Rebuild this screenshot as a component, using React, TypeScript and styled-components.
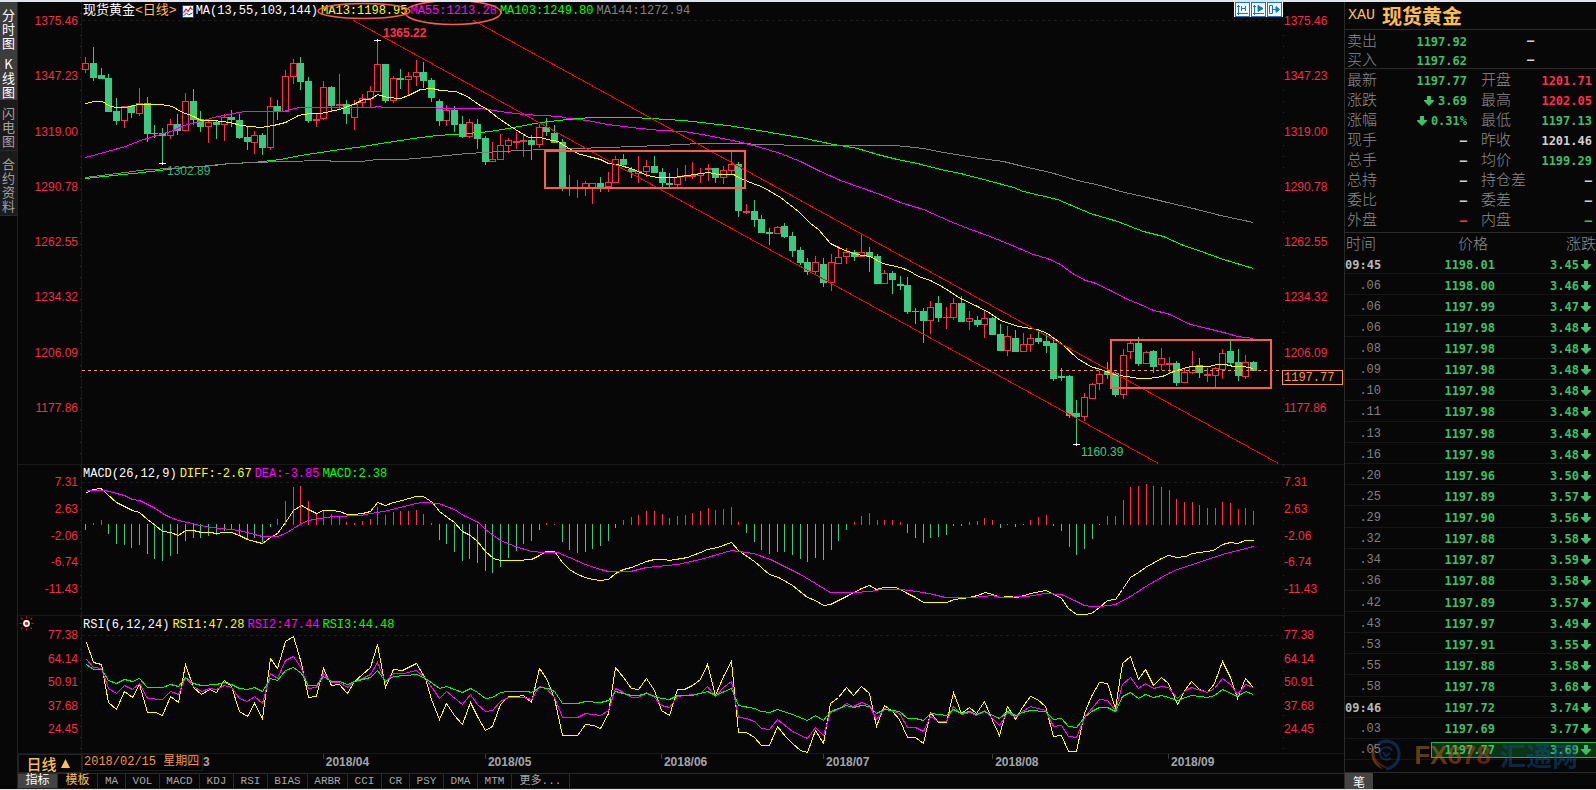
import React from "react";
import styled, { createGlobalStyle } from "styled-components";

const RED = "#ff2f4b";
const GREEN = "#3bc880";
const TEXT_GREEN = "#3cc068";
const AMBER = "#ffbe50";
const ORANGE = "#f79a38";
const YELLOW = "#ffff00";
const MAGENTA = "#ff00ff";
const LIME = "#00ff00";
const GREY = "#808080";
const LINE = "#181818";
const LINE_STRONG = "#2a2a2a";

const MONO = '"Liberation Mono", "Noto Sans CJK SC", monospace';
const BOLD_MONO = '"DejaVu Sans Mono", "Noto Sans CJK SC", monospace';
const SANS = '"Liberation Sans", "Noto Sans CJK SC", sans-serif';
const CJK = '"Noto Sans CJK SC", sans-serif';

/* ---------- data ---------- */

type Candle = [up: 0 | 1, high: number, top: number, bottom: number, low: number];

const candles: Candle[] = [
  [1, 57, 63, 70, 73], [0, 47, 63, 78, 81], [0, 68, 75, 79, 79], [0, 74, 78, 112, 112], [0, 98, 111, 121, 125],
  [1, 106, 106, 121, 128], [0, 105, 106, 113, 118], [1, 88, 103, 114, 116], [0, 97, 103, 134, 142], [0, 125, 133, 134, 138],
  [0, 128, 133, 136, 163], [1, 119, 124, 136, 139], [0, 114, 124, 131, 135], [1, 93, 101, 131, 131], [0, 89, 101, 120, 125],
  [0, 111, 119, 127, 132], [1, 120, 122, 127, 143], [0, 120, 122, 125, 139], [1, 114, 117, 125, 141], [0, 110, 117, 120, 127],
  [0, 114, 120, 138, 139], [0, 126, 137, 142, 150], [1, 131, 135, 143, 154], [0, 133, 135, 148, 155], [1, 97, 106, 148, 150],
  [0, 100, 106, 111, 120], [1, 70, 76, 112, 112], [1, 59, 63, 77, 84], [0, 57, 63, 82, 90], [0, 77, 81, 121, 123],
  [1, 114, 119, 121, 127], [1, 81, 87, 119, 120], [0, 86, 87, 106, 112], [1, 74, 104, 106, 109], [0, 100, 104, 114, 124],
  [1, 100, 104, 118, 130], [1, 94, 98, 103, 107], [1, 86, 91, 99, 107], [1, 40, 64, 92, 92], [0, 64, 64, 101, 103],
  [1, 76, 78, 101, 103], [0, 69, 78, 80, 89], [1, 72, 76, 80, 95], [1, 60, 72, 77, 86], [0, 62, 72, 81, 88],
  [0, 78, 80, 98, 102], [0, 99, 101, 121, 126], [1, 105, 110, 121, 126], [0, 106, 110, 125, 132], [0, 116, 124, 137, 138],
  [1, 119, 122, 137, 138], [0, 119, 124, 139, 149], [0, 136, 138, 162, 165], [1, 142, 159, 162, 162], [1, 134, 145, 160, 160],
  [1, 138, 140, 146, 153], [1, 132, 141, 143, 149], [1, 134, 140, 142, 157], [0, 135, 140, 145, 160], [1, 124, 127, 145, 148],
  [0, 118, 127, 132, 136], [0, 125, 133, 143, 143], [0, 139, 142, 188, 191], [1, 175, 187, 189, 196], [1, 180, 187, 189, 198],
  [1, 181, 183, 188, 196], [1, 183, 183, 188, 204], [0, 177, 183, 188, 192], [1, 172, 182, 187, 192], [1, 156, 159, 183, 183],
  [0, 154, 159, 165, 167], [0, 167, 169, 172, 178], [1, 156, 171, 174, 183], [1, 160, 166, 172, 177], [0, 156, 166, 173, 173],
  [0, 168, 172, 183, 188], [0, 173, 183, 185, 188], [1, 168, 177, 185, 187], [1, 165, 175, 177, 181], [1, 162, 175, 177, 179],
  [1, 168, 173, 176, 183], [1, 164, 168, 170, 181], [0, 168, 168, 178, 183], [1, 166, 170, 178, 184], [1, 152, 164, 171, 175],
  [0, 162, 164, 211, 217], [1, 204, 211, 213, 214], [0, 200, 211, 220, 227], [0, 215, 219, 233, 233], [0, 228, 232, 234, 245],
  [1, 226, 227, 234, 234], [0, 223, 226, 237, 238], [0, 232, 236, 251, 257], [0, 247, 250, 263, 265], [0, 258, 262, 272, 275],
  [1, 256, 262, 272, 275], [0, 258, 264, 283, 287], [1, 254, 262, 283, 291], [1, 246, 257, 264, 264], [1, 248, 252, 257, 264],
  [0, 250, 252, 257, 261], [1, 234, 252, 257, 257], [0, 247, 252, 257, 272], [0, 254, 256, 284, 284], [1, 270, 273, 284, 284],
  [0, 271, 273, 280, 294], [0, 276, 284, 286, 290], [0, 277, 285, 312, 314], [0, 308, 311, 312, 324], [0, 308, 311, 321, 343],
  [1, 301, 307, 321, 334], [0, 296, 303, 318, 322], [1, 307, 317, 318, 329], [1, 298, 303, 318, 320], [0, 296, 303, 322, 322],
  [1, 311, 318, 322, 330], [0, 316, 320, 325, 327], [1, 310, 318, 325, 338], [0, 317, 318, 335, 335], [0, 324, 334, 351, 351],
  [1, 326, 336, 351, 356], [0, 330, 338, 352, 352], [1, 333, 344, 352, 352], [1, 334, 338, 345, 352], [0, 330, 338, 342, 344],
  [0, 333, 341, 346, 353], [0, 340, 343, 379, 381], [0, 368, 376, 378, 381], [0, 375, 376, 416, 418], [0, 400, 413, 417, 444],
  [1, 393, 397, 417, 421], [1, 383, 384, 399, 399], [1, 371, 374, 384, 390], [0, 362, 371, 375, 379], [0, 372, 373, 395, 397],
  [1, 349, 355, 395, 399], [1, 341, 343, 352, 359], [0, 337, 343, 364, 366], [1, 351, 352, 364, 364], [0, 350, 351, 367, 373],
  [1, 348, 358, 365, 370], [1, 357, 363, 365, 374], [0, 361, 363, 383, 386], [1, 368, 372, 383, 383], [1, 351, 366, 373, 374],
  [0, 358, 365, 373, 378], [1, 368, 374, 376, 382], [1, 367, 368, 376, 387], [1, 349, 353, 370, 379], [0, 341, 351, 363, 365],
  [0, 349, 362, 376, 381], [1, 355, 362, 377, 379], [0, 361, 362, 371, 371],
];

/* Histogram bars, in pixels above (+) or below (-) the zero line. */
const histogram = [
  -6, 2, 5, -10, -20, -21, -24, -21, -30, -35, -37, -32, -30, -17, -14, -14, -12, -11, -7, -5, -12, -15, -14, -18, -3,
  6, 24, 38, 39, 24, 12, 15, 11, 8, 3, 2, 4, 6, 18, 10, 13, 14, 14, 15, 11, 2, -16, -20, -28, -37, -35, -39, -47, -49,
  -43, -34, -27, -20, -17, -6, 2, 1, -18, -26, -29, -28, -25, -22, -17, -4, 5, 8, 10, 14, 14, 11, 7, 9, 10, 12, 14, 17,
  15, 16, 18, 3, -9, -18, -26, -30, -28, -28, -31, -35, -38, -34, -36, -26, -17, -6, 3, 9, 12, 5, 5, 5, 3, -9, -14, -19,
  -14, -13, -11, -2, -2, 3, 4, 7, 5, -4, -1, -3, -1, 5, 8, 10, -2, -7, -23, -31, -25, -15, -1, 9, 9, 25, 38, 39, 41, 39,
  38, 35, 26, 23, 23, 20, 17, 17, 23, 22, 16, 17, 14,
];

const ma13 =
  "85,103 94,101 102,101 108,105 115,107 125,107 138,104 160,104 172,106 180,111 193,116 201,120 213,120 230,122 240,125 260,127 273,125 285,122 298,115 310,113 320,113 339,109 353,104 363,99 370,99 377,94 387,97 400,98 408,95 420,89 432,88 440,90 455,91 467,96 478,104 487,109 497,117 510,126 515,129 528,137 540,137 547,139 558,141 562,144 577,153 588,156 600,159 608,163 617,164 633,169 647,175 657,177 673,177 687,175 708,172 718,174 733,174 740,178 750,182 763,187 780,197 798,211 810,223 818,229 830,243 840,248 853,253 862,255 870,256 882,263 900,267 908,270 918,276 930,280 943,287 960,298 977,306 990,313 1000,320 1018,326 1037,329 1047,333 1062,344 1077,358 1090,366 1100,369 1117,375 1127,376 1138,378 1148,378 1162,376 1173,371 1190,366 1208,366 1217,364 1225,364 1233,366 1243,366 1253,368";
const ma55 =
  "85,157 107,151 125,146 140,140 160,134 173,130 183,125 200,121 213,117 233,113 245,111 283,111 298,107 373,107 377,106 384,107 430,107 440,108 480,108 500,111 523,114 560,116 567,118 587,120 607,124 640,128 660,130 683,131 707,135 737,141 757,146 780,153 800,161 820,171 840,180 860,187 877,193 903,203 923,209 950,221 970,229 987,235 1007,243 1033,254 1047,258 1060,264 1072,273 1085,280 1093,282 1110,290 1125,298 1140,304 1153,310 1167,313 1190,324 1207,328 1227,333 1237,336 1253,338";
const ma103 =
  "85,178 113,175 133,173 167,169 187,167 213,165 230,163 253,162 280,159 300,155 333,150 363,146 387,142 400,140 420,137 437,135 467,133 490,131 513,127 540,122 567,119 590,117 633,117 683,120 727,125 753,129 787,135 800,137 833,144 857,148 877,154 897,159 917,163 940,169 960,173 987,180 1013,187 1023,191 1057,199 1090,213 1117,221 1143,231 1163,236 1183,245 1198,250 1223,259 1253,268";
const ma144 =
  "85,177 117,173 147,169 173,168 200,166 230,163 280,161 327,160 333,161 360,161 377,159 403,159 427,157 467,153 500,151 543,149 607,147 660,145 700,143 733,143 767,144 800,145 895,145 923,148 943,152 973,157 1003,161 1023,166 1050,172 1077,180 1100,185 1120,191 1147,197 1167,202 1193,208 1220,215 1253,222";
const diff =
  "86,492 93,489 100,488 102,489 107,494 116,502 124,506 132,510 139,512 147,519 155,525 162,531 170,532 178,535 185,530 193,530 201,532 210,532 216,533 224,532 231,532 239,535 247,539 254,541 262,543 270,537 277,533 285,522 293,510 301,505 308,509 316,513 323,510 331,510 339,511 347,514 354,514 362,513 370,511 377,502 385,505 393,502 402,500 415,496 423,496 432,502 439,511 447,517 454,522 462,531 470,535 477,541 485,551 493,558 500,560 517,560 531,559 539,555 546,551 554,551 562,562 569,569 577,574 585,577 592,579 600,580 608,579 615,573 623,569 631,567 646,561 654,559 663,559 669,560 687,557 700,552 707,549 717,547 731,542 738,550 754,561 769,574 778,577 792,585 807,597 815,600 823,605 830,604 838,600 846,596 861,588 869,585 876,589 883,587 895,587 900,589 907,593 915,597 923,602 932,602 946,602 954,599 962,598 969,597 977,595 985,592 992,594 1000,597 1007,596 1017,597 1030,593 1045,590 1054,594 1061,598 1068,608 1076,614 1084,614 1091,613 1099,607 1107,600 1115,599 1122,589 1130,577 1138,572 1145,567 1161,558 1168,555 1177,557 1185,556 1192,553 1213,550 1222,544 1230,542 1237,543 1245,540 1253,540";
const dea =
  "86,490 105,490 116,493 124,495 132,499 139,500 147,504 155,508 162,513 170,517 178,520 187,522 200,525 210,527 231,529 243,531 254,534 262,536 277,536 285,533 293,528 301,523 308,520 320,518 333,516 360,515 370,513 383,511 400,507 415,503 423,502 438,503 454,509 463,515 478,522 485,529 493,535 500,540 515,546 531,551 543,552 557,552 569,557 585,564 600,569 608,571 630,571 646,567 677,564 700,559 731,550 753,553 770,559 792,570 800,574 815,583 823,588 830,592 853,592 870,591 880,589 900,589 917,591 933,594 945,597 973,597 992,595 1000,597 1027,596 1045,593 1061,594 1076,601 1084,605 1091,606 1100,606 1115,604 1130,596 1147,585 1161,577 1170,572 1177,569 1192,564 1222,554 1253,546";
const rsi1 =
  "86,642 93,662 101,664 108,702 116,709 124,691 132,697 139,684 147,712 155,712 162,715 170,696 178,702 185,664 193,687 201,694 209,689 216,692 224,680 231,686 239,711 247,716 254,703 262,718 270,658 277,668 285,641 293,636 301,663 308,697 316,696 323,668 331,685 339,684 347,693 354,681 370,667 377,644 385,687 393,669 402,670 416,663 425,678 431,699 439,719 446,703 454,715 462,724 470,702 477,716 485,730 492,726 500,704 508,696 516,696 523,695 531,702 539,668 546,678 554,698 562,735 577,735 585,724 593,725 600,728 608,713 615,667 623,677 631,688 638,689 646,678 654,690 661,710 669,715 677,689 684,689 692,685 700,679 707,664 715,695 723,676 731,661 738,732 746,732 754,737 761,745 769,745 777,726 785,736 792,743 800,750 807,752 815,730 823,743 830,703 838,697 846,687 853,695 861,686 869,693 876,726 884,705 892,711 899,719 907,737 915,737 923,743 930,712 938,722 946,722 953,692 961,713 969,707 976,713 984,701 992,720 999,735 1007,706 1015,719 1022,707 1030,696 1037,699 1045,706 1053,736 1061,735 1068,751 1076,751 1084,713 1091,696 1099,682 1107,683 1115,708 1122,663 1130,656 1138,679 1145,669 1153,685 1161,677 1168,683 1177,704 1185,689 1191,681 1199,689 1207,692 1214,683 1222,661 1230,677 1237,698 1245,678 1253,687";
const rsi2 =
  "86,659 93,667 101,668 108,688 116,693 124,685 132,689 139,683 147,698 162,699 170,691 178,694 185,677 193,686 201,691 209,688 216,689 224,685 231,687 239,698 247,701 254,696 262,703 270,673 277,678 285,660 293,656 301,668 308,688 316,687 323,673 331,682 339,682 347,687 354,681 362,678 370,674 377,662 385,682 393,673 403,673 416,670 425,678 439,698 446,691 462,704 470,694 477,704 485,711 492,710 500,701 508,697 523,697 531,699 539,686 546,688 554,697 562,717 577,717 585,713 600,715 608,710 615,688 623,692 631,697 638,697 646,692 654,697 661,705 669,707 677,696 700,693 707,686 715,696 723,687 731,681 738,717 746,718 754,721 761,728 769,729 777,719 792,731 807,738 815,727 823,735 830,712 838,709 846,703 853,706 861,702 869,705 876,719 884,708 899,713 907,727 915,727 923,731 930,716 938,721 946,721 953,706 961,714 969,712 976,715 984,710 999,725 1007,712 1015,717 1022,711 1030,706 1045,710 1053,726 1061,725 1068,736 1076,737 1084,717 1099,699 1107,700 1115,710 1122,684 1130,677 1138,688 1145,683 1153,688 1161,686 1168,687 1177,698 1185,690 1191,687 1207,692 1214,688 1222,678 1230,684 1237,694 1245,684 1253,687";
const rsi3 =
  "86,664 93,669 101,669 108,680 116,683 124,679 132,681 139,678 147,687 162,687 170,684 178,686 185,677 193,683 201,685 216,684 224,682 231,684 239,688 247,689 254,687 262,691 270,678 277,680 285,670 293,667 301,673 308,685 316,685 323,676 331,681 339,681 347,684 354,681 370,677 377,670 385,681 393,676 416,674 425,678 439,688 446,686 462,692 470,688 477,692 485,698 492,697 500,692 508,691 527,691 531,692 539,687 548,688 554,691 562,703 577,703 585,701 600,702 608,700 615,691 631,695 638,695 646,693 661,698 669,699 677,695 692,695 707,691 715,695 731,688 738,705 754,708 761,711 769,712 777,709 792,714 807,720 815,715 823,720 830,711 846,705 853,707 861,705 869,706 876,713 884,709 899,711 907,718 915,718 923,720 930,713 946,715 953,709 961,713 969,711 976,714 984,711 999,718 1007,711 1015,715 1022,712 1030,710 1045,711 1053,719 1061,718 1068,726 1076,727 1084,717 1091,711 1099,707 1107,707 1115,711 1122,696 1130,692 1138,698 1145,694 1153,697 1161,695 1168,697 1177,700 1185,697 1191,695 1207,697 1214,695 1222,689 1237,696 1245,691 1253,694";

const priceScale = ["1375.46", "1347.23", "1319.00", "1290.78", "1262.55", "1234.32", "1206.09", "1177.86"];
const macdScale = ["7.31", "2.63", "-2.06", "-6.74", "-11.43"];
const rsiScale = ["77.38", "64.14", "50.91", "37.68", "24.45"];

const months: [label: string, share: number][] = [
  ["2018/04", 162],
  ["2018/05", 176],
  ["2018/06", 162],
  ["2018/07", 169],
  ["2018/08", 176],
  ["2018/09", 176],
];

const indicators = ["MA", "VOL", "MACD", "KDJ", "RSI", "BIAS", "ARBR", "CCI", "CR", "PSY", "DMA", "MTM"];

type Tone = "up" | "down" | "plain";
type Quote = { label: string; value: string; tone: Tone; arrow?: boolean };

const bidAsk = [
  { label: "卖出", value: "1197.92" },
  { label: "买入", value: "1197.62" },
];

const quotes: Quote[] = [
  { label: "最新", value: "1197.77", tone: "down" },
  { label: "开盘", value: "1201.71", tone: "up" },
  { label: "涨跌", value: "3.69", tone: "down", arrow: true },
  { label: "最高", value: "1202.05", tone: "up" },
  { label: "涨幅", value: "0.31%", tone: "down", arrow: true },
  { label: "最低", value: "1197.13", tone: "down" },
  { label: "现手", value: "–", tone: "plain" },
  { label: "昨收", value: "1201.46", tone: "plain" },
  { label: "总手", value: "–", tone: "plain" },
  { label: "均价", value: "1199.29", tone: "down" },
  { label: "总持", value: "–", tone: "plain" },
  { label: "持仓差", value: "–", tone: "plain" },
  { label: "委比", value: "–", tone: "plain" },
  { label: "委差", value: "–", tone: "plain" },
  { label: "外盘", value: "–", tone: "up" },
  { label: "内盘", value: "–", tone: "down" },
];

const ticks: [time: string, price: string, change: string][] = [
  ["09:45", "1198.01", "3.45"],
  [".06", "1198.00", "3.46"],
  [".06", "1197.99", "3.47"],
  [".06", "1197.98", "3.48"],
  [".08", "1197.98", "3.48"],
  [".09", "1197.98", "3.48"],
  [".10", "1197.98", "3.48"],
  [".11", "1197.98", "3.48"],
  [".13", "1197.98", "3.48"],
  [".16", "1197.98", "3.48"],
  [".20", "1197.96", "3.50"],
  [".25", "1197.89", "3.57"],
  [".29", "1197.90", "3.56"],
  [".32", "1197.88", "3.58"],
  [".34", "1197.87", "3.59"],
  [".36", "1197.88", "3.58"],
  [".42", "1197.89", "3.57"],
  [".43", "1197.97", "3.49"],
  [".53", "1197.91", "3.55"],
  [".55", "1197.88", "3.58"],
  [".58", "1197.78", "3.68"],
  ["09:46", "1197.72", "3.74"],
  [".03", "1197.69", "3.77"],
  [".05", "1197.77", "3.69"],
];

/* ---------- styles ---------- */

const GlobalStyle = createGlobalStyle`
  *, *::before, *::after { box-sizing: border-box; }
  body { margin: 0; background: #070707; }
  button { appearance: none; border: 0; padding: 0; margin: 0; background: none; font: inherit; color: inherit; cursor: pointer; }
  dl, dt, dd, h1, h2 { margin: 0; }
`;

const Page = styled.div`
  display: grid;
  grid-template-columns: 18px minmax(0, 1fr) 252px;
  height: 100vh;
  min-height: 720px;
  border-top: 2px solid #e1e4ea;
  border-bottom: 1px solid #e6e6e6;
  background: #070707;
  color: #fff;
  font-family: ${SANS};
  font-size: 12px;
`;

const ViewNav = styled.nav`
  display: flex;
  flex-direction: column;
  border-right: 1px solid #222;
`;

const ViewButton = styled.button<{ $active?: boolean }>`
  padding: ${(p) => (p.$active ? "6px 2px 1px" : "6px 2px 2px")};
  background: ${(p) => (p.$active ? "#3c3c3c" : "#1b1b1b")};
  color: ${(p) => (p.$active ? "#fff" : "#a0a0a0")};
  border-bottom: ${(p) => (p.$active ? "0" : "1px solid #2a2a2a")};
  font-family: ${CJK};
  font-size: 13px;
  line-height: 14px;
  word-break: break-all;
  text-align: center;
`;

const Workspace = styled.main`
  display: grid;
  grid-template-rows: 462fr 151fr 138fr 20px 16px;
  min-width: 0;
`;

const Panel = styled.section<{ $line?: boolean }>`
  display: grid;
  grid-template-columns: 64px minmax(0, 1fr) 61px;
  min-height: 0;
  border-top: ${(p) => (p.$line ? `1px solid ${LINE}` : "0")};
`;

const Axis = styled.div<{ $side: "left" | "right"; $top: number; $bottom: number }>`
  position: relative;
  display: flex;
  flex-direction: column;
  justify-content: space-between;
  padding: ${(p) => `${p.$top}px 3px ${p.$bottom}px 1px`};
  text-align: ${(p) => (p.$side === "left" ? "right" : "left")};
  border-right: ${(p) => (p.$side === "left" ? `1px solid ${LINE}` : "0")};
  background: repeating-linear-gradient(to bottom, #2c2c2c 0 1px, transparent 1px 11px)
    ${(p) => (p.$side === "left" ? "right" : "left")} / 1px 100% no-repeat;
  color: #f42c46;
  line-height: 16px;
`;

const LastPrice = styled.output`
  position: absolute;
  top: 368px;
  left: -1px;
  right: 1px;
  height: 15px;
  padding-left: 1px;
  border: 1px solid ${ORANGE};
  background: #070707;
  color: ${ORANGE};
  font-family: ${MONO};
  line-height: 14px;
`;

const Alert = styled.span`
  position: absolute;
  top: 0;
  left: 1px;
  line-height: 0;
`;

const Plot = styled.div`
  position: relative;
  display: grid;
  min-width: 0;
  min-height: 0;
  > * {
    grid-area: 1 / 1;
  }
`;

const ChartSvg = styled.svg`
  display: block;
  width: 100%;
  height: 100%;
  min-height: 0;
  pointer-events: none;
`;

const Legend = styled.div`
  display: flex;
  align-items: center;
  align-self: start;
  gap: 3px;
  height: 18px;
  padding-left: 1px;
  font-family: ${MONO};
  white-space: nowrap;
`;

const LegendItem = styled.span<{ $color?: string }>`
  color: ${(p) => p.$color ?? "#fff"};
`;

const Title = styled.h1`
  display: flex;
  align-items: center;
  font-family: ${MONO};
  font-size: 13px;
  font-weight: 400;
  line-height: 16px;
`;

const LegendIcon = styled.svg`
  width: 12px;
  height: 13px;
  margin-left: 2px;
  margin-right: -1px;
`;

const PlotTools = styled.div`
  display: flex;
  align-self: start;
  justify-self: end;
  gap: 1px;
  padding: 0 1px;
  background: #fff;
`;

const ToolButton = styled.button`
  width: 15px;
  height: 15px;
  border: 1px solid #0d78c8;
  background: #f4faff;
  line-height: 0;
`;

const Callout = styled.span<{ $color: string; $bold?: boolean }>`
  position: absolute;
  color: ${(p) => p.$color};
  font-weight: ${(p) => (p.$bold ? 700 : 400)};
  line-height: 14px;
`;

const DateRow = styled.div`
  display: grid;
  grid-template-columns: 64px minmax(0, 1fr);
  border-top: 1px solid ${LINE};
`;

const PeriodButton = styled.button`
  display: flex;
  align-items: center;
  justify-content: center;
  gap: 4px;
  padding-right: 4px;
  border: 1px solid #242424;
  color: ${AMBER};
  font-family: ${CJK};
  font-size: 15px;
  font-weight: 500;
  line-height: 17px;
`;

const Dates = styled.div`
  display: flex;
  color: #a3a6a9;
  font-weight: 700;
  line-height: 17px;
`;

const DateCell = styled.div<{ $share: number; $first?: boolean }>`
  position: relative;
  display: flex;
  flex: ${(p) => p.$share} 1 0;
  padding-left: ${(p) => (p.$first ? "0" : "3px")};
  &::before {
    content: "";
    position: absolute;
    left: 0;
    top: 0;
    width: 1px;
    height: ${(p) => (p.$first ? "0" : "5px")};
    background: #3a3a3a;
  }
`;

const CursorDate = styled.time`
  width: 121px;
  padding-left: 1px;
  margin-bottom: 2px;
  border: 1px solid #1c1c1c;
  background: #000;
  color: ${ORANGE};
  font-family: ${MONO};
  font-weight: 400;
  line-height: 15px;
  white-space: nowrap;
`;

const TabBar = styled.nav`
  display: flex;
  border-top: 1px solid ${LINE_STRONG};
  border-bottom: 1px solid #222;
  font-family: ${MONO};
  font-size: 11px;
`;

const Tab = styled.button<{ $chars: number; $kind?: "active" | "accent" }>`
  width: ${(p) => 16 + p.$chars * 6}px;
  border-right: 1px solid ${LINE_STRONG};
  background: ${(p) => (p.$kind === "active" ? "#444" : "transparent")};
  color: ${(p) => (p.$kind === "active" ? "#fff" : p.$kind === "accent" ? AMBER : "#a6a6a6")};
  font-size: ${(p) => (p.$kind ? "12px" : "11px")};
  line-height: 14px;
`;

const Sidebar = styled.aside`
  position: relative;
  display: grid;
  grid-template-rows: 28px 39px 164px minmax(0, 1fr) 16px;
  border-left: 1px solid ${LINE_STRONG};
  min-height: 0;
`;

const Instrument = styled.h2`
  display: flex;
  align-items: center;
  gap: 7px;
  padding-left: 3px;
  border-bottom: 1px solid ${LINE_STRONG};
  color: ${AMBER};
  font-family: ${CJK};
  font-size: 20px;
  font-weight: 700;
  line-height: 26px;
`;

const Code = styled.span`
  font-family: ${MONO};
  font-size: 15px;
  font-weight: 400;
`;

const QuoteGrid = styled.dl<{ $rowHeight: number }>`
  display: grid;
  grid-template-columns: 34px 86px 64px minmax(0, 1fr);
  grid-auto-rows: ${(p) => p.$rowHeight}px;
  align-items: center;
  padding: 0 4px 0 2px;
  border-bottom: 1px solid ${LINE_STRONG};
`;

const QuoteLabel = styled.dt<{ $second?: boolean }>`
  padding-left: ${(p) => (p.$second ? "14px" : "0")};
  color: #8c8c8c;
  font-family: ${CJK};
  font-size: 15px;
  font-weight: 300;
  line-height: 18px;
  white-space: nowrap;
`;

const toneColor = { up: RED, down: TEXT_GREEN, plain: "#d0d0d0" };

const QuoteValue = styled.dd<{ $tone: Tone }>`
  display: flex;
  align-items: center;
  justify-content: flex-end;
  gap: 4px;
  padding-top: 4px;
  color: ${(p) => toneColor[p.$tone]};
  font-family: ${BOLD_MONO};
  font-weight: 700;
  line-height: 16px;
`;

const BidSize = styled.dd`
  grid-column: 3 / 5;
  padding: 3px 0 0 60px;
  color: #d0d0d0;
  font-family: ${BOLD_MONO};
  font-weight: 700;
`;

const TickArea = styled.div`
  min-height: 0;
  padding-bottom: 12px;
  border-bottom: 1px solid ${LINE_STRONG};
`;

const TickTable = styled.table`
  width: 100%;
  height: 100%;
  border-collapse: collapse;
  table-layout: fixed;
`;

const Heading = styled.th<{ $width?: number; $indent: number }>`
  width: ${(p) => (p.$width ? `${p.$width}px` : "auto")};
  height: 20px;
  padding: 0 0 0 ${(p) => p.$indent}px;
  color: #8c8c8c;
  font-family: ${CJK};
  font-size: 15px;
  font-weight: 300;
  line-height: 20px;
  text-align: left;
  white-space: nowrap;
`;

const TickRow = styled.tr`
  border-bottom: 1px solid #161616;
`;

const TimeCell = styled.td<{ $minute: boolean }>`
  padding: 4px 50px 0 0;
  color: ${(p) => (p.$minute ? "#b8b8b8" : "#808080")};
  font-family: ${(p) => (p.$minute ? BOLD_MONO : MONO)};
  font-weight: ${(p) => (p.$minute ? 700 : 400)};
  line-height: 15px;
  text-align: right;
`;

const NumberCell = styled.td`
  padding: 3px 0 0;
  color: ${TEXT_GREEN};
  font-family: ${BOLD_MONO};
  font-weight: 700;
`;

const Figure = styled.div<{ $hot: boolean; $start?: boolean; $right: number }>`
  display: flex;
  align-items: center;
  justify-content: flex-end;
  gap: 2px;
  height: 16px;
  padding-right: ${(p) => p.$right}px;
  border-style: solid;
  border-color: ${(p) => (p.$hot ? "#25b455" : "transparent")};
  border-width: 1px 0 1px ${(p) => (p.$start ? "1px" : "0")};
  background: ${(p) => (p.$hot ? "#0c3414" : "transparent")};
`;

const SideTab = styled.button`
  width: 28px;
  background: #444;
  color: #fff;
  font-family: ${CJK};
  line-height: 15px;
`;

const Watermark = styled.div`
  position: absolute;
  right: 18px;
  bottom: 18px;
  display: flex;
  align-items: center;
  gap: 9px;
  height: 32px;
  opacity: 0.44;
  font-size: 26px;
  font-weight: 700;
  line-height: 32px;
  pointer-events: none;
`;

const WatermarkCode = styled.span`
  margin-left: 4px;
  background: linear-gradient(to right, #d08a20, #d8401c);
  background-clip: text;
  color: transparent;
`;

const WatermarkName = styled.span`
  color: #12509c;
  font-family: ${CJK};
`;

/* ---------- drawing parts ---------- */

const barX = (i: number) => Math.floor(85.7 + i * 7.684);

const Trace = ({ points, color }: { points: string; color: string }) => (
  <polyline points={points} fill="none" stroke={color} strokeWidth="1" transform="translate(0.5 0.5)" />
);

const GuideLine = ({ y }: { y: number }) => (
  <line x1="82" x2="1283" y1={y + 0.5} y2={y + 0.5} stroke="#1c1c1c" strokeDasharray="3 3" />
);

const CandleShape = ({ candle, index }: { candle: Candle; index: number }) => {
  const [up, high, top, bottom, low] = candle;
  const x = barX(index);
  const thin = bottom - top < 3;
  const height = Math.max(bottom - top, 1);
  return (
    <g>
      <rect x={x} y={high} width="1" height={low - high} fill={up ? RED : GREEN} />
      {up && !thin ? (
        <rect x={x - 2.5} y={top + 0.5} width="6" height={height - 1} fill="#070707" stroke={RED} />
      ) : (
        <rect x={x - 3} y={top} width="7" height={height} fill={up ? RED : GREEN} />
      )}
    </g>
  );
};

const Cross = ({ x, y }: { x: number; y: number }) => (
  <g fill="#fff">
    <rect x={x - 3} y={y} width="7" height="1" />
    <rect x={x} y={y - 1} width="1" height="3" />
  </g>
);

const DownArrow = () => (
  <svg width="10" height="10" viewBox="0 0 10 10" aria-hidden="true">
    <path d="M3 0H7V4H10V5L5 10L0 5V4H3Z" fill={TEXT_GREEN} />
  </svg>
);

const AxisLabels = ({ values }: { values: string[] }) => (
  <>
    {values.map((v) => (
      <span key={v}>{v}</span>
    ))}
  </>
);

const PricePlot = () => (
  <Plot>
    <Legend>
      <Title>
        现货黄金<LegendItem $color={AMBER}>&lt;日线&gt;</LegendItem>
      </Title>
      <LegendIcon viewBox="0 0 12 13" aria-hidden="true">
        <rect x="0.5" y="0.5" width="11" height="12" fill="#fff" stroke="#2438c8" />
        <path d="M1.5 8L4 4L6 6.5L8.5 2.5L10.5 5" fill="none" stroke="#e81c1c" strokeWidth="1.2" />
        <path d="M1.5 11L4.5 8L6.5 10L10.5 8" fill="none" stroke="#2438c8" />
      </LegendIcon>
      <LegendItem>MA(13,55,103,144)</LegendItem>
      <LegendItem $color={YELLOW}>MA13:1198.95</LegendItem>
      <LegendItem $color={MAGENTA}>MA55:1213.28</LegendItem>
      <LegendItem $color={LIME}>MA103:1249.80</LegendItem>
      <LegendItem $color={GREY}>MA144:1272.94</LegendItem>
    </Legend>
    <Callout $color={RED} $bold style={{ left: `${(301 / 1201) * 100}%`, top: `${(24 / 462) * 100}%` }}>
      1365.22
    </Callout>
    <Callout $color="#30b878" style={{ left: `${(85 / 1201) * 100}%`, top: `${(162 / 462) * 100}%` }}>
      1302.89
    </Callout>
    <Callout $color={GREEN} style={{ left: `${(999 / 1201) * 100}%`, top: `${(443 / 462) * 100}%` }}>
      1160.39
    </Callout>
    <ChartSvg viewBox="82 2 1201 462" preserveAspectRatio="none" shapeRendering="crispEdges" role="img" aria-label="K线图">
      <GuideLine y={20} />
      {candles.map((c, i) => (
        <CandleShape key={i} candle={c} index={i} />
      ))}
      <Trace points={ma103} color={LIME} />
      <Trace points={ma144} color={GREY} />
      <Trace points={ma55} color={MAGENTA} />
      <Trace points={ma13} color={YELLOW} />
      <Trace points="353,20 1158,463" color="#ff0000" />
      <Trace points="473,20 1278,463" color="#ff0000" />
      <line x1="82" x2="1281" y1="370.5" y2="370.5" stroke={ORANGE} strokeDasharray="3 3" />
      <Cross x={162} y={163} />
      <Cross x={377} y={40} />
      <Cross x={1076} y={444} />
      <g fill="none" stroke="#ff5c4a" strokeWidth="2">
        <rect x="545" y="151" width="200" height="37" />
        <rect x="1111" y="340" width="160" height="48" />
        <ellipse cx="364" cy="11" rx="46" ry="7.5" strokeWidth="1.6" shapeRendering="auto" />
        <ellipse cx="453" cy="12.5" rx="48" ry="12" strokeWidth="1.6" shapeRendering="auto" />
      </g>
    </ChartSvg>
    <PlotTools>
      <ToolButton aria-label="缩放区间">
        <svg width="13" height="13" viewBox="0 0 13 13" fill="none" stroke="#0d78c8">
          <path d="M2.5 2V12M1 10.5H12M5.5 3V8M9.5 3V8M5.5 5.5H9.5M1 3.5H4" />
        </svg>
      </ToolButton>
      <ToolButton aria-label="播放">
        <svg width="13" height="13" viewBox="0 0 13 13" fill="none" stroke="#0d78c8">
          <path d="M2.5 2V12M1 10.5H12M1 3.5H4" />
          <path d="M6 2.5L11 5.5L6 8.5Z" fill="#0d78c8" />
        </svg>
      </ToolButton>
      <ToolButton aria-label="跳到最新">
        <svg width="13" height="13" viewBox="0 0 13 13" fill="none" stroke="#0d78c8">
          <path d="M1.5 2.5H4.5V10.5H1.5Z M5 6.5H11" />
          <path d="M8 3.5L11.5 6.5L8 9.5Z" fill="#0d78c8" />
        </svg>
      </ToolButton>
    </PlotTools>
  </Plot>
);

const MacdPlot = () => (
  <Plot>
    <Legend>
      <LegendItem>MACD(26,12,9)</LegendItem>
      <LegendItem $color={YELLOW}>DIFF:-2.67</LegendItem>
      <LegendItem $color={MAGENTA}>DEA:-3.85</LegendItem>
      <LegendItem $color={LIME}>MACD:2.38</LegendItem>
    </Legend>
    <ChartSvg viewBox="82 465 1201 150" preserveAspectRatio="none" shapeRendering="crispEdges" role="img" aria-label="MACD">
      <GuideLine y={482} />
      {histogram.map((h, i) => (
        <rect key={i} x={barX(i)} y={h > 0 ? 525 - h : 524} width="1" height={Math.abs(h)} fill={h > 0 ? RED : GREEN} />
      ))}
      <Trace points={diff} color={YELLOW} />
      <Trace points={dea} color={MAGENTA} />
    </ChartSvg>
  </Plot>
);

const RsiPlot = () => (
  <Plot>
    <Legend>
      <LegendItem>RSI(6,12,24)</LegendItem>
      <LegendItem $color={YELLOW}>RSI1:47.28</LegendItem>
      <LegendItem $color={MAGENTA}>RSI2:47.44</LegendItem>
      <LegendItem $color={LIME}>RSI3:44.48</LegendItem>
    </Legend>
    <ChartSvg viewBox="82 616 1201 137" preserveAspectRatio="none" shapeRendering="crispEdges" role="img" aria-label="RSI">
      <GuideLine y={635} />
      <Trace points={rsi1} color={YELLOW} />
      <Trace points={rsi2} color={MAGENTA} />
      <Trace points={rsi3} color={LIME} />
    </ChartSvg>
  </Plot>
);

const AlertLamp = () => (
  <svg width="15" height="15" viewBox="0 0 15 15" aria-hidden="true">
    <circle cx="7.5" cy="7.5" r="2.6" fill="#ff1010" stroke="#fff" strokeWidth="1.6" />
    <path
      d="M7.5 0.5V2.5M7.5 12.5V14.5M0.5 7.5H2.5M12.5 7.5H14.5M2 2L3.5 3.5M11.5 11.5L13 13M13 2L11.5 3.5M3.5 11.5L2 13"
      stroke="#e01010"
      strokeWidth="1.1"
    />
  </svg>
);

const WatermarkLogo = () => (
  <svg width="32" height="32" viewBox="0 0 32 32" fill="none" aria-hidden="true">
    <path d="M7 4C-1 12 2 27 14 30C6 24 3 14 7 4Z" fill="#d07818" />
    <path d="M4 14C5 24 13 30 22 29C12 27 7 22 4 14Z" fill="#e03010" />
    <path d="M8 7C14 -1 28 1 30 13C31 22 25 29 17 30" stroke="#1450a8" strokeWidth="3" />
    <path d="M22 19C17 23 10 19 11 13C13 7 21 7 23 12" stroke="#1450a8" strokeWidth="2" />
    <path d="M14 13L17 17L21 14" stroke="#1450a8" strokeWidth="2" />
  </svg>
);

export default function App() {
  return (
    <>
      <GlobalStyle />
      <Page>
        <ViewNav aria-label="视图">
          <ViewButton $active>分时图</ViewButton>
          <ViewButton $active>K线图</ViewButton>
          <ViewButton>闪电图</ViewButton>
          <ViewButton>合约资料</ViewButton>
        </ViewNav>

        <Workspace>
          <Panel>
            <Axis $side="left" $top={11} $bottom={48}>
              <AxisLabels values={priceScale} />
            </Axis>
            <PricePlot />
            <Axis $side="right" $top={11} $bottom={48}>
              <AxisLabels values={priceScale} />
              <LastPrice>1197.77</LastPrice>
            </Axis>
          </Panel>

          <Panel $line>
            <Axis $side="left" $top={9} $bottom={18}>
              <AxisLabels values={macdScale} />
            </Axis>
            <MacdPlot />
            <Axis $side="right" $top={9} $bottom={18}>
              <AxisLabels values={macdScale} />
            </Axis>
          </Panel>

          <Panel $line>
            <Axis $side="left" $top={11} $bottom={16}>
              <Alert>
                <AlertLamp />
              </Alert>
              <AxisLabels values={rsiScale} />
            </Axis>
            <RsiPlot />
            <Axis $side="right" $top={11} $bottom={16}>
              <AxisLabels values={rsiScale} />
            </Axis>
          </Panel>

          <DateRow>
            <PeriodButton>
              日线
              <svg width="9" height="9" viewBox="0 0 9 9" aria-hidden="true">
                <path d="M4.5 0L9 9H0Z" fill={AMBER} />
              </svg>
            </PeriodButton>
            <Dates>
              <DateCell $share={245} $first>
                <CursorDate>2018/02/15 星期四</CursorDate>3
              </DateCell>
              {months.map(([label, share]) => (
                <DateCell key={label} $share={share}>
                  {label}
                </DateCell>
              ))}
            </Dates>
          </DateRow>

          <TabBar aria-label="指标">
            <Tab $chars={4} $kind="active">
              指标
            </Tab>
            <Tab $chars={4} $kind="accent">
              模板
            </Tab>
            {indicators.map((name) => (
              <Tab key={name} $chars={name.length}>
                {name}
              </Tab>
            ))}
            <Tab $chars={7}>更多...</Tab>
          </TabBar>
        </Workspace>

        <Sidebar>
          <Instrument>
            <Code>XAU</Code>现货黄金
          </Instrument>
          <QuoteGrid $rowHeight={19}>
            {bidAsk.map((q) => (
              <React.Fragment key={q.label}>
                <QuoteLabel>{q.label}</QuoteLabel>
                <QuoteValue $tone="down">{q.value}</QuoteValue>
                <BidSize>–</BidSize>
              </React.Fragment>
            ))}
          </QuoteGrid>
          <QuoteGrid $rowHeight={20}>
            {quotes.map((q, i) => (
              <React.Fragment key={q.label}>
                <QuoteLabel $second={i % 2 === 1}>{q.label}</QuoteLabel>
                <QuoteValue $tone={q.tone}>
                  {q.arrow && <DownArrow />}
                  {q.value}
                </QuoteValue>
              </React.Fragment>
            ))}
          </QuoteGrid>
          <TickArea>
            <TickTable>
              <thead>
                <tr>
                  <Heading $width={86} $indent={1}>
                    时间
                  </Heading>
                  <Heading $width={70} $indent={27}>
                    价格
                  </Heading>
                  <Heading $indent={65}>涨跌</Heading>
                </tr>
              </thead>
              <tbody>
                {ticks.map(([time, price, change], i) => {
                  const hot = i === ticks.length - 1;
                  return (
                    <TickRow key={i}>
                      <TimeCell $minute={time.length > 3}>{time}</TimeCell>
                      <NumberCell>
                        <Figure $hot={hot} $start $right={6}>
                          {price}
                        </Figure>
                      </NumberCell>
                      <NumberCell>
                        <Figure $hot={hot} $right={5}>
                          {change}
                          <DownArrow />
                        </Figure>
                      </NumberCell>
                    </TickRow>
                  );
                })}
              </tbody>
            </TickTable>
          </TickArea>
          <SideTab>笔</SideTab>
          <Watermark aria-hidden="true">
            <WatermarkLogo />
            <WatermarkCode>FX678</WatermarkCode>
            <WatermarkName>汇通网</WatermarkName>
          </Watermark>
        </Sidebar>
      </Page>
    </>
  );
}
